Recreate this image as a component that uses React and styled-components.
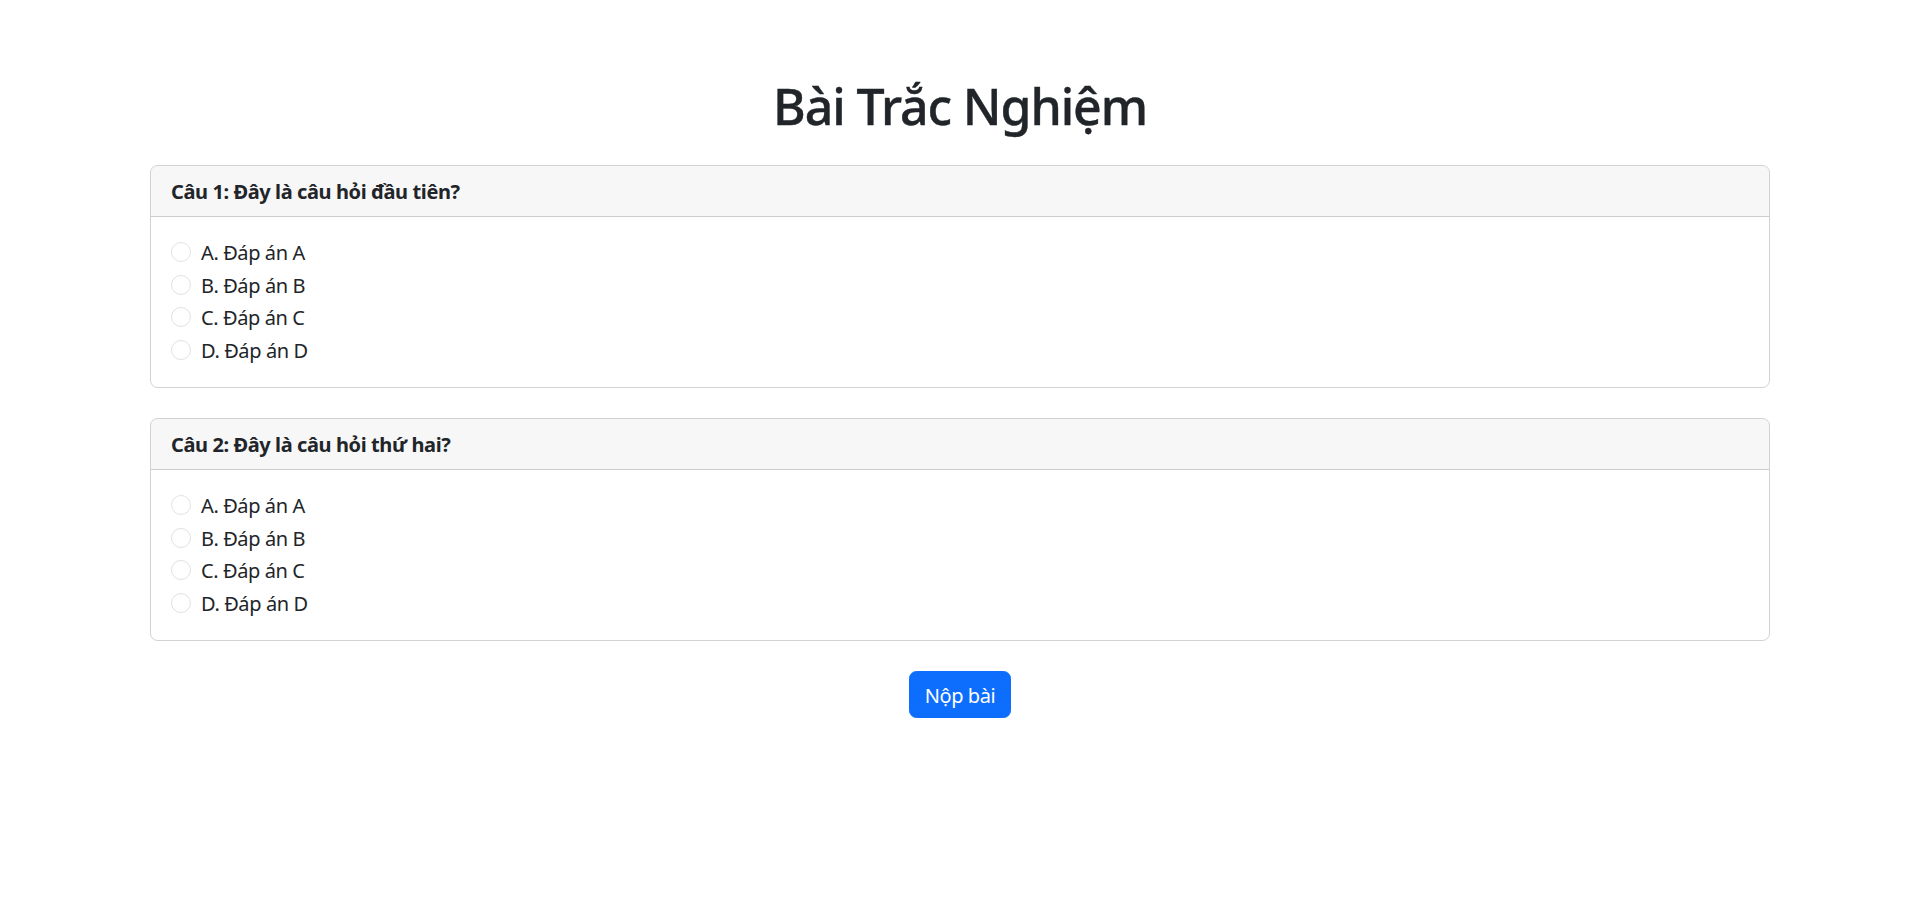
import React from "react";
import styled, { createGlobalStyle } from "styled-components";

const Global = createGlobalStyle`
  * { box-sizing: border-box; }
  body {
    margin: 0;
    font-family: "Segoe UI", "Noto Sans", sans-serif;
    font-size: 20px;
    line-height: 1.5;
    letter-spacing: -0.02em;
    color: #212529;
    background: #fff;
  }
`;

const Container = styled.div`
  width: 1650px;
  margin: 0 auto;
  padding: 76px 15px 0;
`;

const Title = styled.h1`
  margin: 0 0 29px;
  font-size: 50px;
  font-weight: 500;
  line-height: 1.2;
  letter-spacing: -0.022em;
  text-align: center;
  -webkit-text-stroke: 0.4px #212529;
`;

const Card = styled.div`
  border: 1px solid rgba(0, 0, 0, 0.175);
  border-radius: 7.5px;
  margin-bottom: 30px;
  overflow: hidden;
`;

const CardHeader = styled.div`
  padding: 11px 20px 9px;
  background: rgba(0, 0, 0, 0.03);
  border-bottom: 1px solid rgba(0, 0, 0, 0.175);
  font-weight: 700;
`;

const CardBody = styled.div`
  padding: 21px 20px 19px;
`;

const Option = styled.label`
  display: flex;
  align-items: flex-start;
  min-height: 30px;
  margin-bottom: 2.5px;
  cursor: pointer;
`;

const Radio = styled.input`
  appearance: none;
  width: 20px;
  height: 20px;
  margin: 4px 10px 0 0;
  border: 1px solid #dee2e6;
  border-radius: 50%;
  background: #fff;
  flex-shrink: 0;
  &:checked {
    background: #0d6efd;
    border-color: #0d6efd;
    box-shadow: inset 0 0 0 4px #0d6efd, inset 0 0 0 10px #fff;
  }
`;

const Actions = styled.div`
  text-align: center;
`;

const Button = styled.button`
  font-family: inherit;
  font-size: 20px;
  line-height: 1.5;
  letter-spacing: inherit;
  padding: 8.5px 15px 6.5px;
  color: #fff;
  background: #0d6efd;
  border: 1px solid #0d6efd;
  border-radius: 7.5px;
  cursor: pointer;
`;

const questions = [
  { id: 1, text: "Câu 1: Đây là câu hỏi đầu tiên?" },
  { id: 2, text: "Câu 2: Đây là câu hỏi thứ hai?" },
];
const options = ["A", "B", "C", "D"];

export default function App() {
  return (
    <>
      <Global />
      <Container>
        <Title>Bài Trắc Nghiệm</Title>
        {questions.map((q) => (
          <Card key={q.id}>
            <CardHeader>{q.text}</CardHeader>
            <CardBody>
              {options.map((o) => (
                <Option key={o}>
                  <Radio type="radio" name={`q${q.id}`} value={o} />
                  {o}. Đáp án {o}
                </Option>
              ))}
            </CardBody>
          </Card>
        ))}
        <Actions>
          <Button>Nộp bài</Button>
        </Actions>
      </Container>
    </>
  );
}
